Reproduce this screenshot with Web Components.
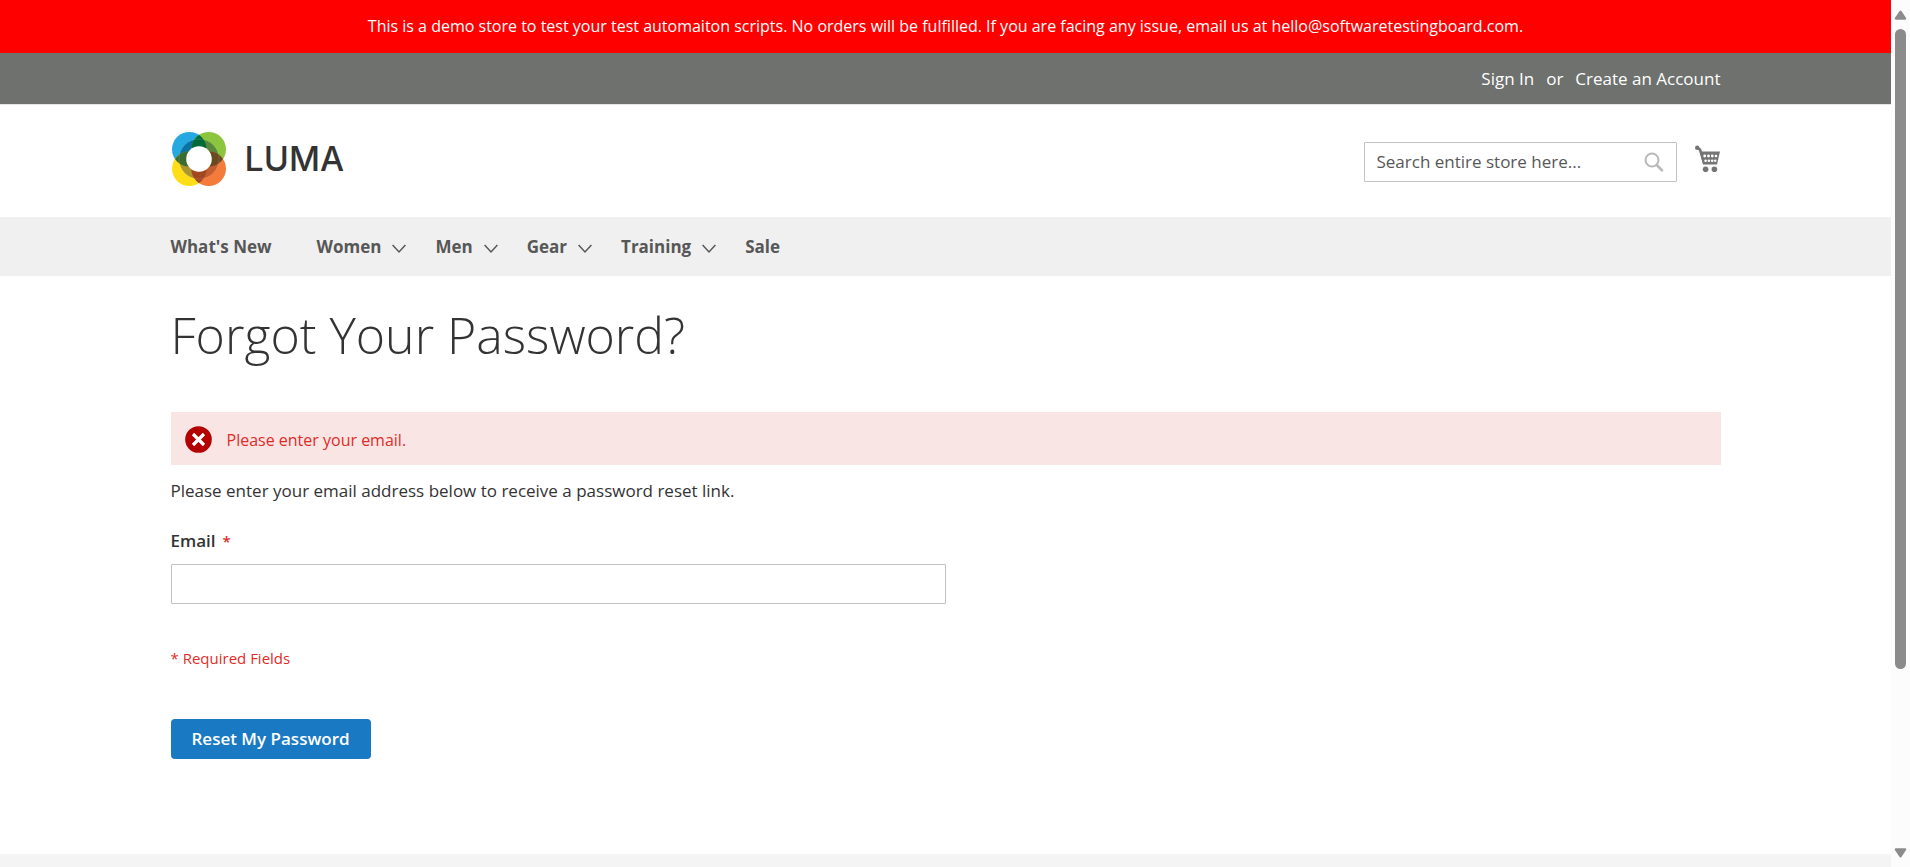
<!DOCTYPE html>
<html lang="en">
<head>
<meta charset="utf-8">
<title>Forgot Your Password?</title>
<style>
  body { margin: 0; background: #fff; color: #333; font-family: "Open Sans", "Noto Sans", sans-serif; font-size: 17px; line-height: 24px; }
</style>
</head>
<body>
<store-page></store-page>
<script>
const define = (name, html) => {
  const template = document.createElement('template');
  template.innerHTML = html;
  customElements.define(name, class extends HTMLElement {
    constructor() {
      super();
      this.attachShadow({ mode: 'open' }).append(template.content.cloneNode(true));
    }
  });
};

define('page-container', `
<style>
  :host { display: block; box-sizing: border-box; width: 100%; max-width: 1600px; margin: 0 auto; padding: 0 25px; }
</style><slot></slot>`);

define('demo-notice', `
<style>
  :host { display: block; background: #f00; color: #fff; text-align: center; font-size: 16px; line-height: 23px; padding: 15px 10px; }
  p { margin: 0; }
</style><p><slot></slot></p>`);

define('account-bar', `
<style>
  :host { display: block; background: #6e716e; color: #fff; border-bottom: 1px solid #e5e5e5; }
  nav { display: flex; justify-content: flex-end; gap: 12px; padding: 14px 0 13px; }
  a { color: inherit; text-decoration: none; }
</style>
<page-container><nav aria-label="Account"><a href="#signin">Sign In</a><span>or</span><a href="#create">Create an Account</a></nav></page-container>`);

define('luma-logo', `
<style>
  :host { display: block; }
  a { display: flex; align-items: center; gap: 18px; color: #333; text-decoration: none; }
  svg { display: block; width: 56px; height: 56px; }
  span { font: 500 34px/40px Inter, "Open Sans", sans-serif; }
</style>
<a href="#home">
  <svg viewBox="-28 -28 56 56" aria-hidden="true">
    <defs>
      <clipPath id="tl"><circle cx="-9.7" cy="-9.7" r="17.3"/></clipPath>
      <clipPath id="tr"><circle cx="9.7" cy="-9.7" r="17.3"/></clipPath>
      <clipPath id="bl"><circle cx="-9.7" cy="9.7" r="17.3"/></clipPath>
      <clipPath id="br"><circle cx="9.7" cy="9.7" r="17.3"/></clipPath>
    </defs>
    <circle cx="-9.7" cy="-9.7" r="17.3" fill="#26a8e0"/>
    <circle cx="9.7" cy="-9.7" r="17.3" fill="#8cc63f"/>
    <circle cx="-9.7" cy="9.7" r="17.3" fill="#ffde17"/>
    <circle cx="9.7" cy="9.7" r="17.3" fill="#f47b3b"/>
    <circle r="20" fill="#0a739f" clip-path="url(#tl)"/>
    <circle r="20" fill="#598839" clip-path="url(#tr)"/>
    <circle r="20" fill="#aa952e" clip-path="url(#bl)"/>
    <circle r="20" fill="#c35f2e" clip-path="url(#br)"/>
    <g clip-path="url(#tl)"><circle cx="9.7" cy="-9.7" r="17.3" fill="#006b38"/><circle cx="-9.7" cy="9.7" r="17.3" fill="#3c6b2f"/></g>
    <g clip-path="url(#br)"><circle cx="9.7" cy="-9.7" r="17.3" fill="#684a1e"/><circle cx="-9.7" cy="9.7" r="17.3" fill="#a34720"/></g>
    <circle r="20" fill="none" stroke="#fff" stroke-opacity=".25" stroke-width=".5"/>
    <circle r="12.8" fill="#fff"/>
  </svg>
  <span>LUMA</span>
</a>`);

define('store-search', `
<style>
  :host { display: block; width: 313px; }
  form { display: flex; align-items: center; box-sizing: border-box; height: 40px; border: 1px solid #c2c2c2; border-radius: 1px; background: #fff; padding: 0 12px; }
  input { flex: 1; min-width: 0; border: 0; padding: 0; outline: 0; background: none; font: inherit; color: #333; }
  input::placeholder { color: #575757; opacity: 1; }
  button { border: 0; padding: 0; background: none; }
  svg { display: block; width: 20px; height: 20px; fill: none; stroke: #b9b9b9; stroke-linecap: round; }
</style>
<form role="search">
  <input type="text" aria-label="Search" placeholder="Search entire store here...">
  <button type="button" aria-label="Search"><svg viewBox="0 0 20 20"><circle cx="8" cy="8" r="6.5" stroke-width="2"/><path d="M12.8 13 18 18.3" stroke-width="2.6"/></svg></button>
</form>`);

define('cart-link', `
<style>
  :host { display: block; }
  svg { display: block; width: 26px; height: 28px; }
</style>
<a href="#cart" aria-label="My Cart"><svg viewBox="0 0 26 28">
  <circle cx="2.2" cy="2.8" r="2.2" fill="#757575"/>
  <path d="M2.4 2.8 5 4.6 9 18" fill="none" stroke="#757575" stroke-width="2.6"/>
  <path d="M4.9 6.5H25L22 19.5H8Z" fill="#757575"/>
  <g fill="#fff"><circle cx="9.7" cy="11" r="1.4"/><circle cx="13.5" cy="11" r="1.4"/><circle cx="17.3" cy="11" r="1.4"/><circle cx="21" cy="11" r="1.3"/><circle cx="10.6" cy="15.8" r="1.3"/><circle cx="13.9" cy="15.8" r="1.3"/><circle cx="17.2" cy="15.8" r="1.3"/><circle cx="20.2" cy="15.8" r="1.2"/></g>
  <circle cx="10.6" cy="24.2" r="2.8" fill="#757575"/><circle cx="19.4" cy="24.2" r="2.8" fill="#757575"/>
</svg></a>`);

define('store-header', `
<style>
  :host { display: block; }
  header { display: flex; justify-content: space-between; align-items: flex-start; padding: 26px 0 30px; }
  .tools { display: flex; gap: 18px; padding-top: 11px; }
  cart-link { padding-top: 3px; }
</style>
<page-container><header><luma-logo></luma-logo><div class="tools"><store-search></store-search><cart-link></cart-link></div></header></page-container>`);

define('nav-item', `
<style>
  :host { display: block; }
  a { display: flex; align-items: center; gap: 11px; color: #575757; font-weight: 700; text-decoration: none; white-space: nowrap; }
  svg { display: none; width: 14px; height: 10px; fill: none; stroke: #575757; stroke-width: 1.5; padding-top: 3px; }
  :host([menu]) svg { display: block; }
</style>
<a href="#category"><slot></slot><svg viewBox="0 0 14 10" aria-hidden="true"><path d="M.6 1 7 8 13.4 1"/></svg></a>`);

define('store-nav', `
<style>
  :host { display: block; background: #f0f0f0; }
  nav { display: flex; gap: 29px; padding: 18px 0 17px; }
  .first { margin-right: 16px; }
</style>
<page-container><nav aria-label="Main">
  <nav-item class="first">What's New</nav-item><nav-item menu>Women</nav-item><nav-item menu>Men</nav-item><nav-item menu>Gear</nav-item><nav-item menu>Training</nav-item><nav-item>Sale</nav-item>
</nav></page-container>`);

define('error-message', `
<style>
  :host { display: flex; align-items: center; gap: 15px; padding: 14px 14px 12px; background: #fae5e5; color: #e02b27; font-size: 16px; }
  svg { display: block; width: 27px; height: 27px; flex: none; }
</style>
<svg viewBox="0 0 27 27" aria-hidden="true"><circle cx="13.5" cy="13.5" r="13.3" fill="#b30000"/><path d="M8 8 19 19M19 8 8 19" stroke="#fff" stroke-width="3.2"/></svg>
<span role="alert"><slot></slot></span>`);

define('password-form', `
<style>
  :host { display: block; }
  form { display: flex; flex-direction: column; align-items: flex-start; padding: 14px 0 95px; }
  p { margin: 0; }
  .label { display: flex; gap: 7px; margin-top: 26px; font-weight: 600; }
  .star { color: #e02b27; font-size: 15px; }
  input { box-sizing: border-box; width: 50%; height: 40px; margin: 11px 0 0; padding: 0 11px; border: 1px solid #c2c2c2; border-radius: 1px; background: #fff; font: inherit; }
  .required { margin-top: 42px; color: #e02b27; font-size: 15px; }
  button { margin-top: 49px; height: 40px; padding: 0 21px; border: 0; border-radius: 4px; background: #1979c3; color: #fff; font: inherit; font-weight: 600; }
</style>
<form>
  <p>Please enter your email address below to receive a password reset link.</p>
  <label class="label" for="email">Email <span class="star">*</span></label>
  <input id="email" type="email">
  <p class="required">* Required Fields</p>
  <button type="button">Reset My Password</button>
</form>`);

define('scroll-rail', `
<style>
  :host { display: flex; flex-direction: column; align-items: center; box-sizing: border-box; height: 100vh; padding: 10px 0 9px; background: #fcfcfc; }
  svg { display: block; width: 13px; height: 10px; fill: #8b8b8b; flex: none; }
  .track { flex: 1; width: 11px; padding: 9px 0; }
  .thumb { height: 79%; border-radius: 6px; background: #8b8b8b; }
</style>
<svg viewBox="0 0 14 10"><path d="M6 .8Q7-.5 8 .8L13 8.2Q13.8 10 12 10H2Q.2 10 1 8.2Z"/></svg>
<div class="track"><div class="thumb"></div></div>
<svg viewBox="0 0 14 10"><path d="M6 9.2Q7 10.5 8 9.2L13 1.8Q13.8 0 12 0H2Q.2 0 1 1.8Z"/></svg>`);

define('store-page', `
<style>
  :host { display: grid; grid-template-columns: minmax(0, 1fr) 19px; height: 100vh; overflow: hidden; }
  .page { display: flex; flex-direction: column; min-height: 100vh; }
  h1 { margin: 0; padding: 32px 0 50px; font-size: 50px; line-height: 54px; font-weight: 300; }
  footer { flex: 1; background: #f4f4f4; }
</style>
<div class="page">
  <demo-notice>This is a demo store to test your test automaiton scripts. No orders will be fulfilled. If you are facing any issue, email us at hello@softwaretestingboard.com.</demo-notice>
  <account-bar></account-bar>
  <store-header></store-header>
  <store-nav></store-nav>
  <page-container><main>
    <h1>Forgot Your Password?</h1>
    <error-message>Please enter your email.</error-message>
    <password-form></password-form>
  </main></page-container>
  <footer></footer>
</div>
<scroll-rail aria-hidden="true"></scroll-rail>`);
</script>
</body>
</html>
